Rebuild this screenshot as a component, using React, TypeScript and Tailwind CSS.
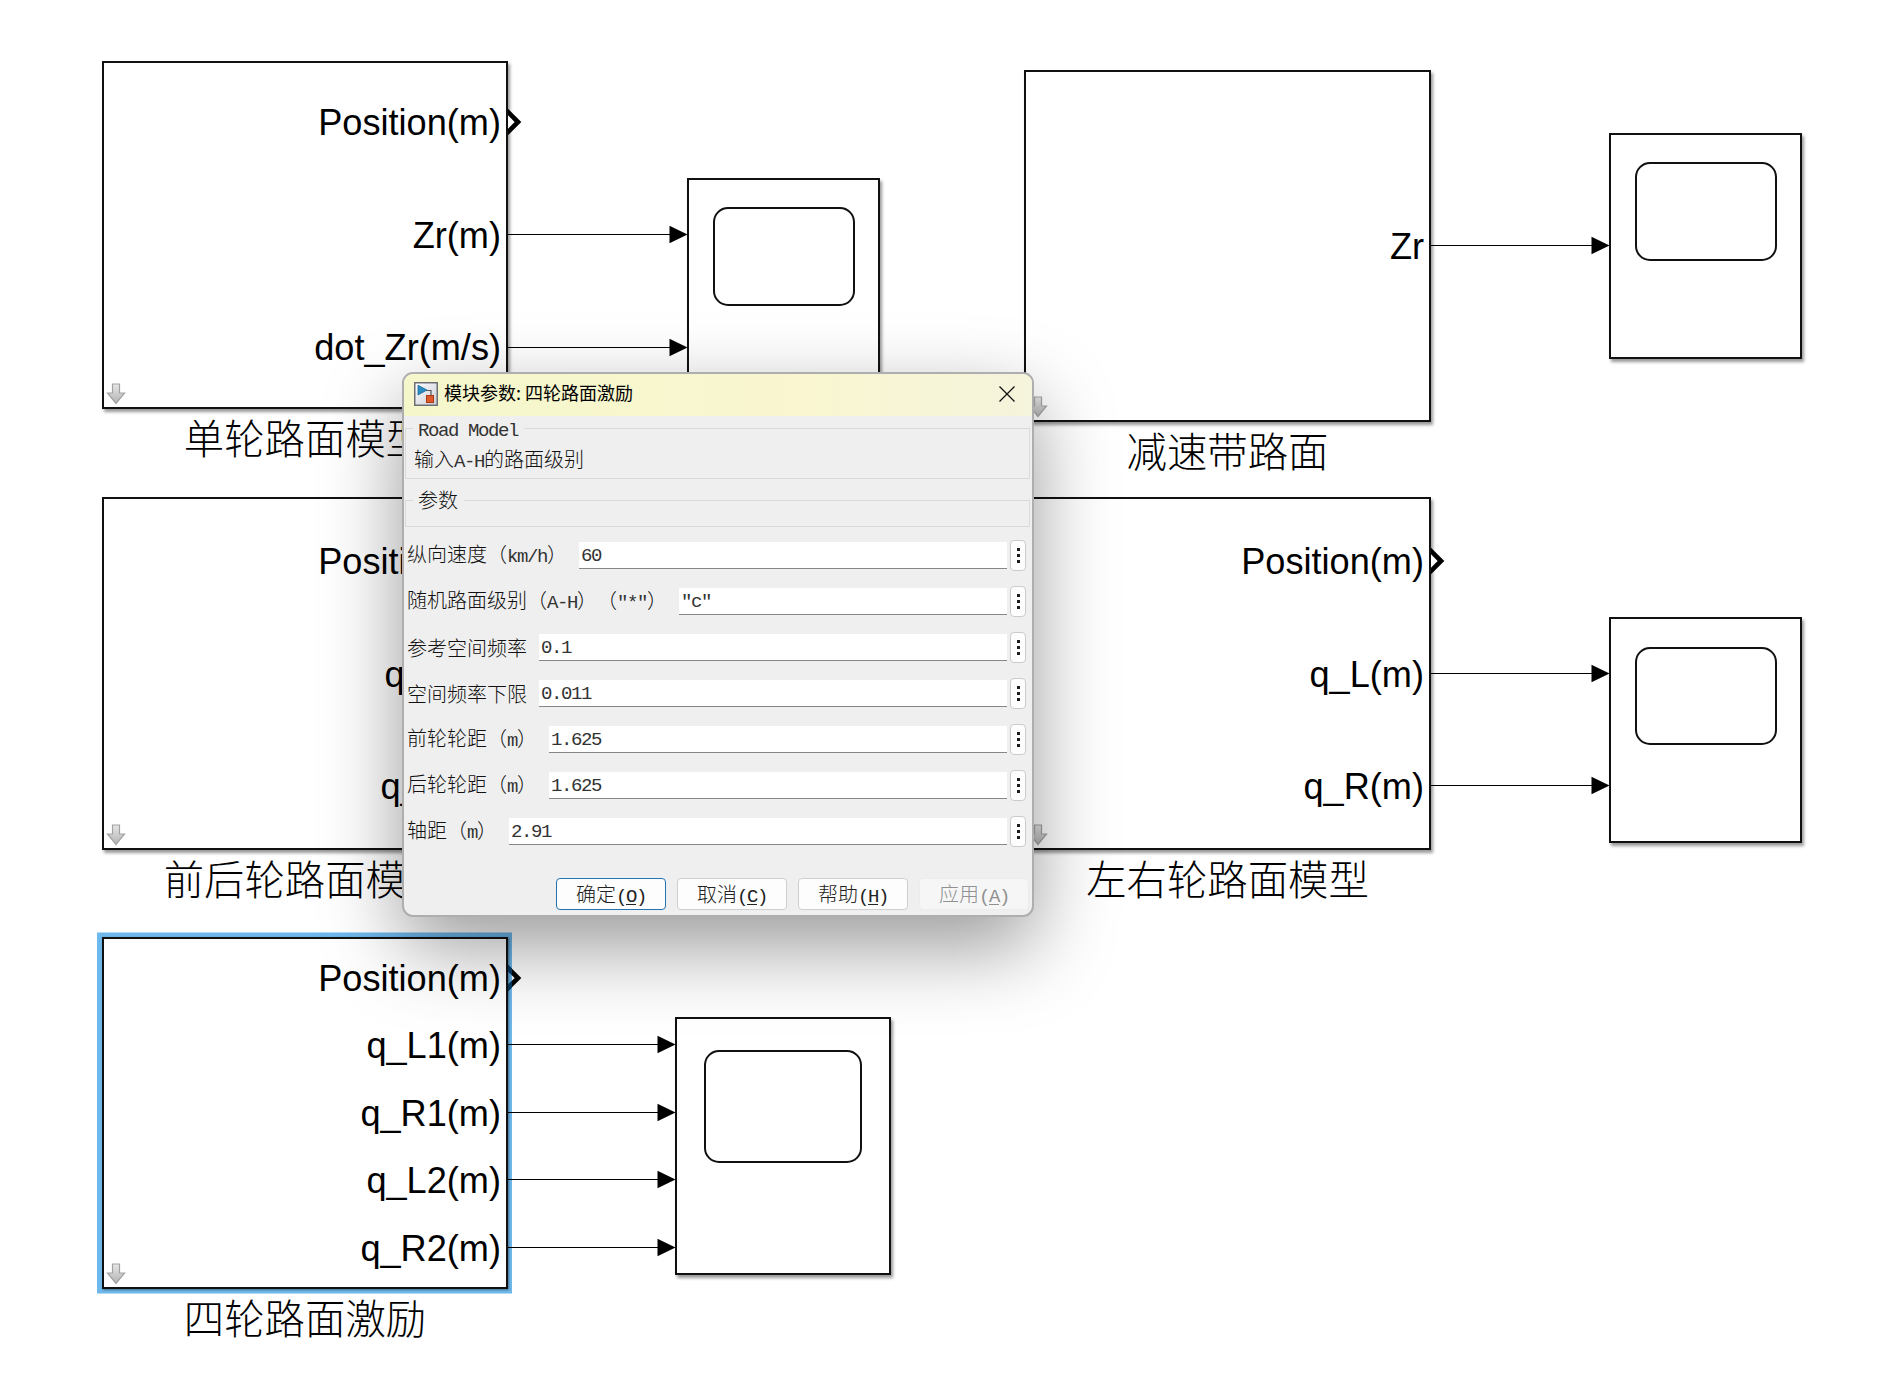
import { useState } from 'react'
import type { ReactNode } from 'react'

interface Port {
  label: string
  y: number
  wired: boolean
}

interface Block {
  name: string
  x: number
  y: number
  w: number
  h: number
  ports: Port[]
  selected?: boolean
}

interface Scope {
  x: number
  y: number
  w: number
  h: number
  screen: { x: number; y: number; w: number; h: number }
}

interface Wire {
  x1: number
  x2: number
  y: number
}

const BLOCKS: Block[] = [
  {
    name: '单轮路面模型', x: 102, y: 61, w: 406, h: 348,
    ports: [
      { label: 'Position(m)', y: 61, wired: false },
      { label: 'Zr(m)', y: 174, wired: true },
      { label: 'dot_Zr(m/s)', y: 286, wired: true },
    ],
  },
  {
    name: '减速带路面', x: 1024, y: 70, w: 407, h: 352,
    ports: [{ label: 'Zr', y: 176, wired: true }],
  },
  {
    name: '前后轮路面模型', x: 102, y: 497, w: 406, h: 353,
    ports: [
      { label: 'Position(m)', y: 64, wired: false },
      { label: 'q_F(m)', y: 177, wired: true },
      { label: 'q_R(m)', y: 289, wired: true },
    ],
  },
  {
    name: '左右轮路面模型', x: 1024, y: 497, w: 407, h: 353,
    ports: [
      { label: 'Position(m)', y: 64, wired: false },
      { label: 'q_L(m)', y: 177, wired: true },
      { label: 'q_R(m)', y: 289, wired: true },
    ],
  },
  {
    name: '四轮路面激励', x: 102, y: 937, w: 406, h: 352, selected: true,
    ports: [
      { label: 'Position(m)', y: 41, wired: false },
      { label: 'q_L1(m)', y: 108, wired: true },
      { label: 'q_R1(m)', y: 176, wired: true },
      { label: 'q_L2(m)', y: 243, wired: true },
      { label: 'q_R2(m)', y: 311, wired: true },
    ],
  },
]

const SCOPES: Scope[] = [
  { x: 687, y: 178, w: 193, h: 226, screen: { x: 26, y: 29, w: 142, h: 99 } },
  { x: 1609, y: 133, w: 193, h: 226, screen: { x: 26, y: 29, w: 142, h: 99 } },
  { x: 1609, y: 617, w: 193, h: 226, screen: { x: 26, y: 30, w: 142, h: 98 } },
  { x: 675, y: 1017, w: 216, h: 258, screen: { x: 29, y: 33, w: 158, h: 113 } },
]

const WIRES: Wire[] = [
  { x1: 508, x2: 687, y: 234.5 },
  { x1: 508, x2: 687, y: 347.5 },
  { x1: 1431, x2: 1609, y: 245.5 },
  { x1: 1431, x2: 1609, y: 673.5 },
  { x1: 1431, x2: 1609, y: 785.5 },
  { x1: 508, x2: 675, y: 1044.5 },
  { x1: 508, x2: 675, y: 1112.5 },
  { x1: 508, x2: 675, y: 1179.5 },
  { x1: 508, x2: 675, y: 1247.5 },
]

const PARAMS = [
  { label: '纵向速度（km/h）', value: '60' },
  { label: '随机路面级别（A-H）（"*"）', value: '"c"' },
  { label: '参考空间频率', value: '0.1' },
  { label: '空间频率下限', value: '0.011' },
  { label: '前轮轮距（m）', value: '1.625' },
  { label: '后轮轮距（m）', value: '1.625' },
  { label: '轴距（m）', value: '2.91' },
]

// Half-width characters take exactly half of a CJK cell
function Mixed({ text }: { text: string }) {
  return (
    <>
      {text.split(/([\x20-\x7e]+)/).map((part, i) =>
        i % 2 ? (
          <span key={i} className="font-['Liberation_Mono',monospace] text-[19px] tracking-[-1.4px] text-[#333]">{part}</span>
        ) : (
          part
        )
      )}
    </>
  )
}

function LibraryArrow() {
  return (
    <svg className="absolute bottom-[2px] left-[2px]" width="20" height="22" viewBox="0 0 20 22">
      <defs>
        <linearGradient id="arrow" x1="0" y1="0" x2="0" y2="1">
          <stop offset="0" stopColor="#e6e6e6" />
          <stop offset="1" stopColor="#b4b4b4" />
        </linearGradient>
      </defs>
      <path d="M6.5 1h7v9h5L10 20.5 1.500 10h5z" fill="url(#arrow)" stroke="#a3a3a3" strokeWidth="1.2" />
    </svg>
  )
}

function OpenPort({ y, selected }: { y: number; selected?: boolean }) {
  return (
    <>
      <svg className="absolute left-full" style={{ top: y - 14 }} width="14" height="28" viewBox="0 0 14 28">
        <path d="M-2 2L10 14-2 26" fill={selected ? 'none' : '#fff'} stroke="#000" strokeWidth="4.700" />
      </svg>
      {selected && (
        <svg className="absolute left-full" style={{ top: y - 14 }} width="4" height="28" viewBox="0 0 4 28">
          <path d="M-2 2L10 14-2 26" fill="none" stroke="#063a63" strokeWidth="4.700" />
        </svg>
      )}
    </>
  )
}

function BlockNode({ block }: { block: Block }) {
  return (
    <div className="absolute" style={{ left: block.x, top: block.y, width: block.w, height: block.h }}>
      <div
        className={`relative h-full w-full border-2 border-[#111] bg-white ${
          block.selected
            ? 'shadow-[1px_1px_2px_rgba(0,0,0,0.4),-0.5px_0_0_4.5px_#6fb8ec]'
            : 'shadow-[2px_3px_3px_rgba(0,0,0,0.4)]'
        }`}
      >
        <LibraryArrow />
        {block.ports.map((port) => (
          <span
            key={port.label}
            className="absolute right-[5px] text-[36.15px] leading-[36px] whitespace-nowrap text-black"
            style={{ top: port.y - 19 }}
          >
            {port.label}
          </span>
        ))}
      </div>
      {block.ports.filter((p) => !p.wired).map((p) => (
        <OpenPort key={p.label} y={p.y} selected={block.selected} />
      ))}
      <p className="absolute top-full left-1/2 mt-[8px] -translate-x-1/2 font-['Noto_Sans_CJK_SC',sans-serif] text-[40.4px] leading-[40px] font-light whitespace-nowrap text-black">
        {block.name}
      </p>
    </div>
  )
}

function ScopeNode({ scope }: { scope: Scope }) {
  const { screen } = scope
  return (
    <div
      className="absolute border-2 border-[#111] bg-white shadow-[2px_3px_3px_rgba(0,0,0,0.4)]"
      style={{ left: scope.x, top: scope.y, width: scope.w, height: scope.h }}
    >
      <div
        className="absolute rounded-[15px] border-2 border-[#111]"
        style={{ left: screen.x - 2, top: screen.y - 2, width: screen.w, height: screen.h }}
      />
    </div>
  )
}

function Wires() {
  return (
    <svg className="absolute inset-0" width="1878" height="1376" viewBox="0 0 1878 1376">
      {WIRES.map((w) => (
        <g key={`${w.x1}-${w.y}`}>
          <path d={`M${w.x1} ${w.y}H${w.x2 - 12}`} stroke="#000" strokeWidth="1.200" />
          <path d={`M${w.x2 - 17.5} ${w.y - 8.8}L${w.x2 + 0.5} ${w.y}l-18 8.800z`} fill="#000" />
        </g>
      ))}
    </svg>
  )
}

function DialogIcon() {
  return (
    <svg width="24" height="24" viewBox="0 0 24 24">
      <defs>
        <linearGradient id="tile" x1="0" y1="0" x2="1" y2="1">
          <stop offset="0" stopColor="#ffffff" />
          <stop offset="1" stopColor="#c9ccd6" />
        </linearGradient>
      </defs>
      <rect x="0.75" y="0.75" width="22.500" height="22.500" fill="url(#tile)" stroke="#6d6f78" strokeWidth="1.500" />
      <path d="M12 8.500h5V14" fill="none" stroke="#555" strokeWidth="1.200" />
      <path d="M4 3.200L13 8 4 13z" fill="#2b8cc4" stroke="#1c6a9c" strokeWidth="0.800" />
      <rect x="12.500" y="13.500" width="7" height="7" fill="#dd5a2b" stroke="#a93a15" />
    </svg>
  )
}

function Group({ title, className, children }: { title: string; className: string; children?: ReactNode }) {
  return (
    <fieldset className={`mr-[2px] ml-px border border-[#dadada] ${className}`}>
      <legend className="ml-[7px] h-5 pr-[6px] pl-[5px] leading-5">
        <Mixed text={title} />
      </legend>
      {children}
    </fieldset>
  )
}

function ParamRow({ label, value }: { label: string; value: string }) {
  const [text, setText] = useState(value)
  return (
    <div className="flex h-[46px] items-center pr-[6px] pl-[3px]">
      <label className="mr-[12px] shrink-0 pt-px whitespace-nowrap">
        <Mixed text={label} />
      </label>
      <input
        value={text}
        onChange={(e) => setText(e.target.value)}
        className="mt-px mr-[3px] h-[27px] min-w-0 flex-1 border-b border-[#868686] bg-white pt-[2px] pl-[2px] font-['Liberation_Mono',monospace] text-[19px] tracking-[-1.4px] text-[#333] outline-none"
      />
      <button type="button" className="flex h-[31px] w-4 shrink-0 flex-col items-center justify-center gap-[3px] rounded-[4px] border border-[#cbcbcb] bg-[#fdfdfd]">
        <i className="size-[3px] bg-[#1c1c1c]" />
        <i className="size-[3px] bg-[#1c1c1c]" />
        <i className="size-[3px] bg-[#1c1c1c]" />
      </button>
    </div>
  )
}

function DialogButton({ text, hotkey, className }: { text: string; hotkey: string; className: string }) {
  return (
    <button type="button" className={`h-8 w-[110px] rounded-[4px] border pt-[2px] whitespace-nowrap ${className}`}>
      {text}
      <span className="font-['Liberation_Mono',monospace] text-[19px] tracking-[-1.4px]">
        (<span className="underline underline-offset-2">{hotkey}</span>)
      </span>
    </button>
  )
}

function ParamDialog() {
  return (
    <div className="absolute top-[372px] left-[402px] flex h-[545px] w-[632px] flex-col overflow-hidden rounded-[11px] border-2 border-[#aeaeae] bg-[#efefef] font-['Noto_Sans_CJK_SC',sans-serif] text-[20px] leading-6 font-light text-[#111] shadow-[0_30px_80px_rgba(0,0,0,0.4)] [text-spacing-trim:space-all]">
      <header className="flex h-[42px] shrink-0 items-center bg-linear-to-r from-[#f5f7cb] via-[#f9f6cf] via-60% to-[#f5f4dc] pr-[17px] pb-[3px] pl-[10px]">
        <DialogIcon />
        <h1 className="mb-[3px] ml-[6px] flex-1 text-[18px] font-normal text-black">模块参数: 四轮路面激励</h1>
        <svg width="16" height="16" viewBox="0 0 16 16">
          <path d="M0.500 0.500l15 15M15.500 0.500l-15 15" stroke="#111" strokeWidth="1.300" />
        </svg>
      </header>

      <Group title="Road Model" className="mt-[2px] h-[61px]">
        <p className="mt-[9px] pl-[8px]">
          <Mixed text="输入A-H的路面级别" />
        </p>
      </Group>
      <Group title="参数" className="mt-[11px] h-[37px]" />

      <div className="mt-[5px]">
        {PARAMS.map((p) => (
          <ParamRow key={p.label} {...p} />
        ))}
      </div>

      <footer className="mt-auto mb-[5px] flex justify-end gap-[11px] pr-[3px]">
        <DialogButton text="确定" hotkey="O" className="border-[#2373b0] bg-[#fdfdfd] text-[#222]" />
        <DialogButton text="取消" hotkey="C" className="border-[#cfcfcf] bg-[#fdfdfd] text-[#222]" />
        <DialogButton text="帮助" hotkey="H" className="border-[#cfcfcf] bg-[#fdfdfd] text-[#222]" />
        <DialogButton text="应用" hotkey="A" className="border-[#ececec] bg-[#f6f6f6] text-[#909090]" />
      </footer>
    </div>
  )
}

export default function App() {
  return (
    <main className="relative h-[1376px] w-[1878px] overflow-hidden bg-white font-['Liberation_Sans',Arial,sans-serif]">
      {BLOCKS.map((b) => (
        <BlockNode key={b.name} block={b} />
      ))}
      {SCOPES.map((s) => (
        <ScopeNode key={`${s.x}-${s.y}`} scope={s} />
      ))}
      <Wires />
      <ParamDialog />
    </main>
  )
}
